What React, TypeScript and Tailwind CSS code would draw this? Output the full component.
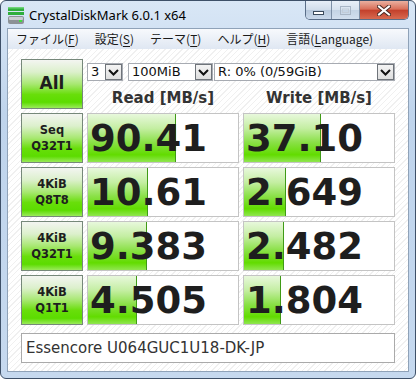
import React from 'react';

type Row = { top: string; bottom: string; read: string; readBar: number; write: string; writeBar: number };

const rows: Row[] = [
  { top: 'Seq', bottom: 'Q32T1', read: '90.41', readBar: 88, write: '37.10', writeBar: 77 },
  { top: '4KiB', bottom: 'Q8T8', read: '10.61', readBar: 60, write: '2.649', writeBar: 42 },
  { top: '4KiB', bottom: 'Q32T1', read: '9.383', readBar: 59, write: '2.482', writeBar: 40 },
  { top: '4KiB', bottom: 'Q1T1', read: '4.505', readBar: 49, write: '1.804', writeBar: 37 },
];

const greenButton =
  'border border-[#76887a] bg-[linear-gradient(to_bottom,#f3f5f1_0%,#dcf0cc_25%,#a8e872_50%,#68de0a_72%,#5cdc00_88%,#9aea5a_100%)]';

const AppIcon = () => (
  <svg width="16" height="17" viewBox="0 0 16 17">
    <rect x="0" y="0" width="16" height="4" fill="#2fae3c" />
    <rect x="0" y="0" width="16" height="1.5" fill="#6fd47a" />
    <rect x="0" y="5" width="16" height="3" fill="#2fae3c" />
    <rect x="0" y="9" width="16" height="8" rx="2" fill="#8c9296" />
    <rect x="1" y="10" width="14" height="3" rx="1" fill="#c9cdd0" />
    <rect x="11" y="13" width="3" height="2" fill="#3fdc3f" />
  </svg>
);

const Chevron = () => (
  <svg width="11" height="7" viewBox="0 0 11 7">
    <path d="M1 1 L5.5 5.5 L10 1" fill="none" stroke="#111" strokeWidth="2" />
  </svg>
);

const Combo = ({ className, text }: { className: string; text: string }) => (
  <div className={`flex h-[18px] items-stretch border border-[#a7abb2] bg-white ${className}`}>
    <span className="flex-1 pl-[3px] text-[13px] leading-[16px] text-[#111] whitespace-nowrap overflow-hidden">{text}</span>
    <span className="flex w-[17px] items-center justify-center border border-[#6f747a] bg-[linear-gradient(to_bottom,#f4f4f4,#dedede)]">
      <Chevron />
    </span>
  </div>
);

const Cell = ({ value, bar }: { value: string; bar: number }) => (
  <div className="relative flex h-[50px] items-center border border-[#c4c4c4] bg-white">
    <div
      className="absolute left-0 top-0 bottom-0 border-r border-[#3f9a16] bg-[linear-gradient(to_bottom,#e8f8dc_0%,#c4eea2_30%,#88e044_60%,#62dc00_85%,#90e650_100%)]"
      style={{ width: bar }}
    />
    <span className="relative pl-[2px] text-[37px] font-bold leading-none text-[#1e1e1e]">{value}</span>
  </div>
);

const MenuItem = ({ before, accel, after = '' }: { before: string; accel: string; after?: string }) => (
  <span>
    {before}(<u className="underline-offset-2">{accel}</u>
    {after})
  </span>
);

const App: React.FC = () => {
  return (
    <div className="relative h-[379px] w-[416px] overflow-hidden rounded-[6px] border border-[#3e5068] bg-[linear-gradient(to_bottom,#d9e7f6,#bfd4ec_30%,#c6d9ef)] font-['DejaVu_Sans',sans-serif]">
      {/* title bar */}
      <div className="flex h-[27px] items-center gap-[5px] pl-[7px] pt-[2px]">
        <AppIcon />
        <span className="font-['Noto_Sans',sans-serif] text-[13px] text-black">CrystalDiskMark 6.0.1 x64</span>
      </div>

      {/* caption buttons */}
      <div className="absolute right-[6px] top-0 flex h-[19px] overflow-hidden rounded-b-[5px] border border-t-0 border-[#5a6e88]">
        <div className="flex w-[26px] items-end justify-center border-r border-[#7d8fa6] bg-[linear-gradient(to_bottom,#e6eef8,#d0dcea_50%,#b7c8dc_51%,#c9d8ea)] pb-[4px]">
          <svg width="11" height="4" viewBox="0 0 11 4">
            <rect x="0.5" y="0.5" width="10" height="3" fill="#fff" stroke="#3b4a5c" />
          </svg>
        </div>
        <div className="flex w-[28px] items-center justify-center border-r border-[#7d8fa6] bg-[linear-gradient(to_bottom,#e8eff8,#d6e1ee_50%,#c4d3e4_51%,#d2dfee)]">
          <svg width="11" height="9" viewBox="0 0 11 9">
            <rect x="0.5" y="0.5" width="10" height="8" fill="none" stroke="#a9b6c6" />
            <rect x="2.5" y="3" width="6" height="3.5" fill="none" stroke="#c2ccd8" />
          </svg>
        </div>
        <div className="flex w-[48px] items-center justify-center bg-[linear-gradient(to_bottom,#eab0a0,#d9705a_45%,#c3412c_52%,#d86a50)]">
          <svg width="14" height="11" viewBox="0 0 14 11">
            <path d="M2 1.5 L12 9.5 M12 1.5 L2 9.5" stroke="#4a2a24" strokeWidth="4" strokeLinecap="square" />
            <path d="M2 1.5 L12 9.5 M12 1.5 L2 9.5" stroke="#fff" strokeWidth="2" strokeLinecap="square" />
          </svg>
        </div>
      </div>

      {/* client */}
      <div className="mx-[6px] border border-[#8fa2b8]">
        <div className="flex h-[20px] items-center gap-[16px] bg-[linear-gradient(to_bottom,#f7f9fc,#dfe7f2)] pl-[8px] font-['Noto_Sans_CJK_JP',sans-serif] text-[12px] text-[#1a1a1a]">
          <MenuItem before="ファイル" accel="F" />
          <MenuItem before="設定" accel="S" />
          <MenuItem before="テーマ" accel="T" />
          <MenuItem before="ヘルプ" accel="H" />
          <MenuItem before="言語" accel="L" after="anguage" />
        </div>
        <div className="h-[322px] bg-[repeating-linear-gradient(135deg,#ffffff_0px,#ffffff_3px,#f0f0f0_3px,#f0f0f0_4px)] px-[13px] pt-[10px]">
          <div className="grid grid-cols-[62px_152px_152px] gap-[4px]">
            <div className={`flex h-[50px] items-center justify-center text-[17px] font-bold text-[#1e1e1e] ${greenButton}`}>All</div>
            <div className="col-span-2 flex flex-col pt-[4px]">
              <div className="flex">
                <Combo className="w-[36px]" text="3" />
                <Combo className="ml-[5px] w-[85px]" text="100MiB" />
                <Combo className="ml-[1px] w-[181px]" text="R: 0% (0/59GiB)" />
              </div>
              <div className="mt-[8px] grid grid-cols-2 gap-[4px] text-center text-[15px] font-bold leading-[18px] text-[#333]">
                <span>Read [MB/s]</span>
                <span>Write [MB/s]</span>
              </div>
            </div>
            {rows.map((r) => (
              <React.Fragment key={r.read}>
                <div className={`flex h-[50px] flex-col items-center justify-center text-[11.5px] font-bold leading-[16px] text-[#1e1e1e] ${greenButton}`}>
                  <span>{r.top}</span>
                  <span>{r.bottom}</span>
                </div>
                <Cell value={r.read} bar={r.readBar} />
                <Cell value={r.write} bar={r.writeBar} />
              </React.Fragment>
            ))}
          </div>
          <div className="mt-[8px] flex h-[30px] items-center border border-[#aaaaaa] bg-white pl-[4px] text-[15px] text-[#333]">
            Essencore U064GUC1U18-DK-JP
          </div>
        </div>
      </div>
    </div>
  );
};

export default App;
